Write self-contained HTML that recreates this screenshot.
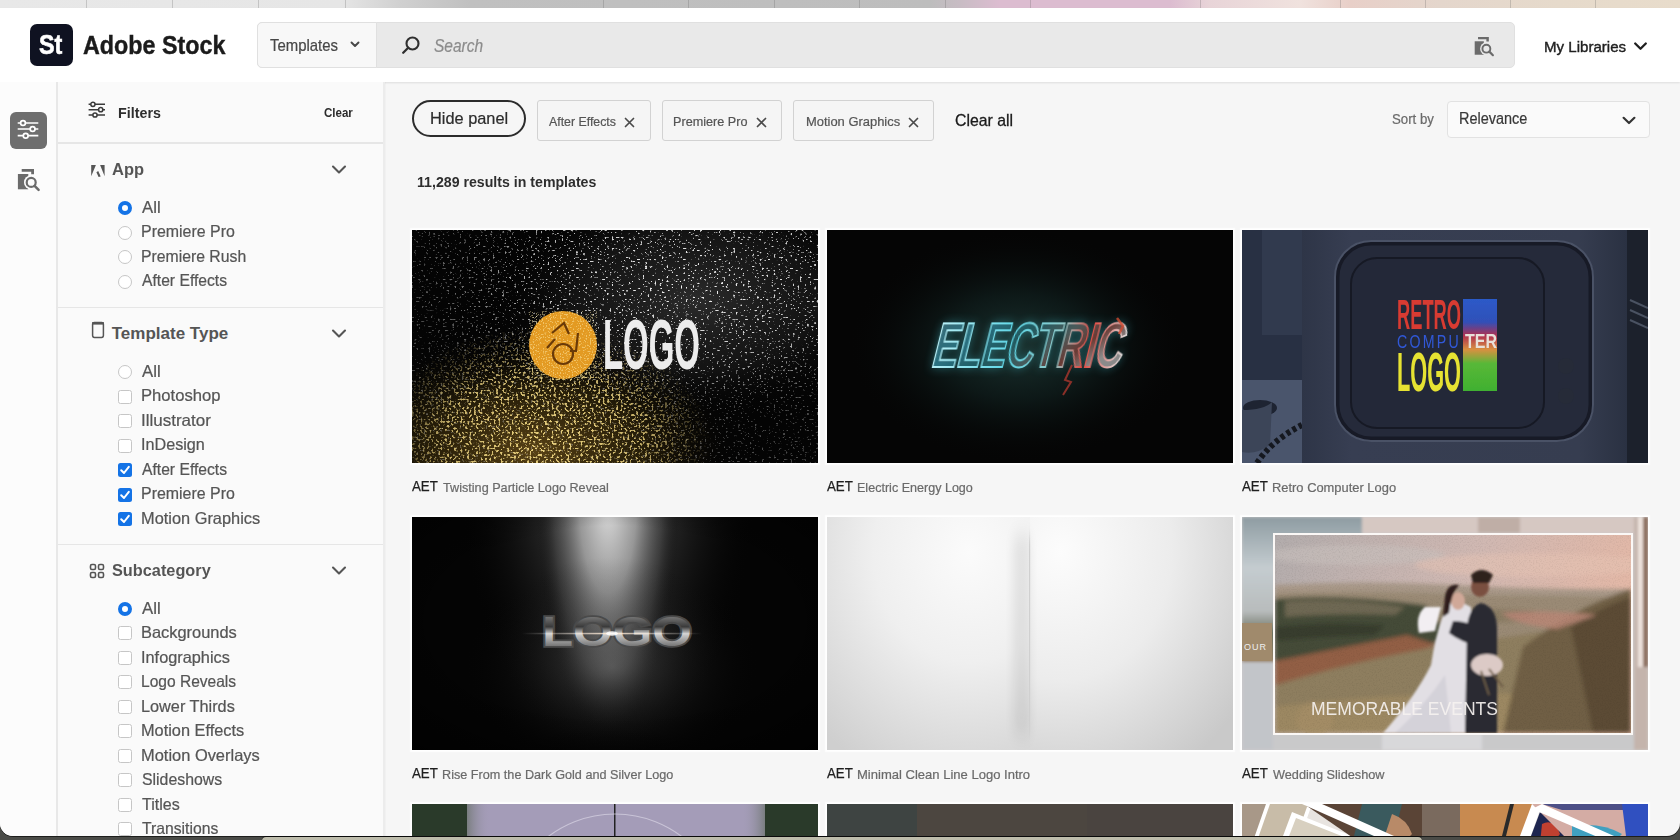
<!DOCTYPE html><html><head><meta charset="utf-8"><style>
*{box-sizing:border-box;margin:0;padding:0}
html,body{width:1680px;height:840px;overflow:hidden;font-family:"Liberation Sans",sans-serif}
body{background:#4a4b47}
.a{position:absolute}
.t{position:absolute;line-height:1;white-space:nowrap;transform-origin:0 0}
#win{position:absolute;left:0;top:0;width:1680px;height:835.8px;box-shadow:0 1px 0 rgba(0,0,0,.6);background:#f6f6f6;border-radius:0 0 13px 13px;overflow:hidden}
.radio{position:absolute;width:14px;height:14px;border-radius:50%;border:1.4px solid #c6c6c6;background:#fff}
.radio.on{border:4.2px solid #1473e6}
.cb{position:absolute;width:14px;height:14px;border-radius:2.5px;border:1.4px solid #c6c6c6;background:#fff}
.cb.on{border:none;background:#1473e6}
.chip{position:absolute;top:100.2px;height:40.6px;border:1px solid #d2d2d2;border-radius:3px;background:#f5f5f5}
.thumb{position:absolute;width:406px;height:233px;overflow:hidden;box-shadow:0 0 0 1.6px #fff,0 0 1px 2.2px rgba(255,255,255,.5)}
</style></head><body><div class="a" style="left:262px;top:836.8px;width:1160px;height:4px;background:#bdbcab;border-radius:6px 6px 0 0;box-shadow:0 -1px 0 #1a1a1a"></div>
<div id="win">
<div class="a" style="left:0;top:0;width:1680px;height:8.4px;background:linear-gradient(90deg,#e8e8e8 0,#e6e6e6 340px,#d0d0d0 400px,#c0c0c0 470px,#bdbdbd 930px,#c8bcc4 960px,#dcbcd0 1000px,#dcbcd0 1170px,#e8d4d8 1210px,#f0e2de 1300px,#e8cfc8 1350px,#e4d6cc 1440px,#e6dacb 1560px,#e8dccb 1680px)"></div>
<div class="a" style="left:86px;top:0;width:1px;height:8.4px;background:rgba(90,90,90,.25)"></div>
<div class="a" style="left:172px;top:0;width:1px;height:8.4px;background:rgba(90,90,90,.25)"></div>
<div class="a" style="left:258px;top:0;width:1px;height:8.4px;background:rgba(90,90,90,.25)"></div>
<div class="a" style="left:345px;top:0;width:1px;height:8.4px;background:rgba(90,90,90,.25)"></div>
<div class="a" style="left:603px;top:0;width:1px;height:8.4px;background:rgba(90,90,90,.25)"></div>
<div class="a" style="left:688px;top:0;width:1px;height:8.4px;background:rgba(90,90,90,.25)"></div>
<div class="a" style="left:774px;top:0;width:1px;height:8.4px;background:rgba(90,90,90,.25)"></div>
<div class="a" style="left:859px;top:0;width:1px;height:8.4px;background:rgba(90,90,90,.25)"></div>
<div class="a" style="left:945px;top:0;width:1px;height:8.4px;background:rgba(90,90,90,.25)"></div>
<div class="a" style="left:1030px;top:0;width:1px;height:8.4px;background:rgba(90,90,90,.25)"></div>
<div class="a" style="left:1200px;top:0;width:1px;height:8.4px;background:rgba(90,90,90,.25)"></div>
<div class="a" style="left:1340px;top:0;width:1px;height:8.4px;background:rgba(90,90,90,.25)"></div>
<div class="a" style="left:1425px;top:0;width:1px;height:8.4px;background:rgba(90,90,90,.25)"></div>
<div class="a" style="left:1510px;top:0;width:1px;height:8.4px;background:rgba(90,90,90,.25)"></div>
<div class="a" style="left:1595px;top:0;width:1px;height:8.4px;background:rgba(90,90,90,.25)"></div>
<div class="a" style="left:0;top:8.4px;width:1680px;height:73.8px;background:#fff;box-shadow:0 1px 2px rgba(0,0,0,.10)"></div>
<div class="a" style="left:30px;top:24px;width:43px;height:42px;background:#0f1221;border-radius:7px"></div>
<span class="t" style="left:39.35px;top:31.85px;font-size:27px;color:#fff;font-weight:bold;transform:scaleX(0.8654);-webkit-text-stroke:0.6px #fff;">St</span>
<span class="t" style="left:83.32px;top:32.66px;font-size:25.7px;color:#1b1b1b;font-weight:bold;transform:scaleX(0.9073);-webkit-text-stroke:0.4px #1b1b1b;">Adobe Stock</span>
<div class="a" style="left:257px;top:22px;width:1258px;height:46px;background:#e9e9e9;border:1px solid #e0e0e0;border-radius:5px"></div>
<div class="a" style="left:257px;top:22px;width:120px;height:46px;background:#f8f8f8;border:1px solid #e0e0e0;border-radius:5px 0 0 5px"></div>
<span class="t" style="left:270.48px;top:36.55px;font-size:17px;color:#474747;transform:scaleX(0.8769);-webkit-text-stroke:0.22px #474747;">Templates</span>
<svg class="a" style="left:349px;top:40px" width="12" height="9" viewBox="0 0 12 9"><path d="M2.5 2.5 L6 6 L9.5 2.5" fill="none" stroke="#474747" stroke-width="1.9" stroke-linecap="round" stroke-linejoin="round"/></svg>
<svg class="a" style="left:400px;top:35px" width="22" height="21" viewBox="0 0 22 21"><circle cx="12.5" cy="8.5" r="6" fill="none" stroke="#2f2f2f" stroke-width="2.1"/><path d="M8.2 12.8 L3.2 17.8" stroke="#2f2f2f" stroke-width="2.3" stroke-linecap="round"/></svg>
<span class="t" style="left:433.57px;top:36.50px;font-size:18px;color:#8c8c8c;font-style:italic;transform:scaleX(0.8610);-webkit-text-stroke:0.22px #8c8c8c;">Search</span>
<svg class="a" style="left:1473px;top:36.1px" width="22.9" height="21.1" viewBox="0 0 26 24"><path d="M5.7 1 H18 V6.3 H15.2 V3.7 H5.7Z" fill="#6b6b6b"/><rect x="1.9" y="6" width="10.4" height="15.3" fill="#6b6b6b"/><circle cx="15.2" cy="14.4" r="7.2" fill="#e9e9e9"/><circle cx="15.2" cy="14.4" r="4.5" fill="none" stroke="#6b6b6b" stroke-width="2.2"/><path d="M18.6 17.8 L22.6 21.8" stroke="#6b6b6b" stroke-width="2.5" stroke-linecap="round"/></svg>
<span class="t" style="left:1543.76px;top:38.68px;font-size:15.2px;color:#1f1f1f;transform:scaleX(0.9932);-webkit-text-stroke:0.4px #1f1f1f;">My Libraries</span>
<svg class="a" style="left:1633px;top:41px" width="15" height="11" viewBox="0 0 15 11"><path d="M2.2 2.5 L7.5 7.8 L12.8 2.5" fill="none" stroke="#1f1f1f" stroke-width="2.3" stroke-linecap="round" stroke-linejoin="round"/></svg>
<div class="a" style="left:0;top:82px;width:58.3px;height:760px;background:#fcfcfc;border-right:2px solid #e8e8e8"></div>
<div class="a" style="left:10px;top:112px;width:37px;height:37px;background:#6e6e6e;border-radius:6px"></div>
<svg class="a" style="left:10px;top:112px" width="37" height="37" viewBox="0 0 37 37"><g stroke="#fff" stroke-width="1.7" fill="none"><path d="M7.7 11H10.6M15.4 11H28.3"/><circle cx="13" cy="11" r="2.4"/><path d="M7.7 17H20.2M25 17H28.3"/><circle cx="22.6" cy="17" r="2.4"/><path d="M7.7 23.7H13.3M18.1 23.7H28.3"/><circle cx="15.7" cy="23.7" r="2.4"/></g></svg>
<svg class="a" style="left:16px;top:168px" width="26" height="24" viewBox="0 0 26 24"><path d="M5.7 1 H18 V6.3 H15.2 V3.7 H5.7Z" fill="#6b6b6b"/><rect x="1.9" y="6" width="10.4" height="15.3" fill="#6b6b6b"/><circle cx="15.2" cy="14.4" r="7.2" fill="#fcfcfc"/><circle cx="15.2" cy="14.4" r="4.5" fill="none" stroke="#6b6b6b" stroke-width="2.2"/><path d="M18.6 17.8 L22.6 21.8" stroke="#6b6b6b" stroke-width="2.5" stroke-linecap="round"/></svg>
<div class="a" style="left:58.3px;top:82px;width:326.7px;height:760px;background:#fafafa;border-right:2px solid #ececec;box-shadow:1px 0 1px rgba(0,0,0,.02)"></div>
<svg class="a" style="left:87px;top:101px" width="20" height="18" viewBox="0 0 20 18"><g stroke="#3a3a3a" stroke-width="1.5" fill="none"><path d="M1.6 3.3H3.8M8 3.3H18"/><circle cx="5.9" cy="3.3" r="2.1"/><path d="M1.6 8.7H11.6M15.8 8.7H18"/><circle cx="13.7" cy="8.7" r="2.1"/><path d="M1.6 14H5.9M10.1 14H18"/><circle cx="8" cy="14" r="2.1"/></g></svg>
<span class="t" style="left:117.58px;top:104.92px;font-size:15.5px;color:#2e2e2e;font-weight:bold;transform:scaleX(0.9222);">Filters</span>
<span class="t" style="left:324.16px;top:106.35px;font-size:13px;color:#2c2c2c;font-weight:bold;transform:scaleX(0.8875);">Clear</span>
<div class="a" style="left:58px;top:142px;width:325px;height:1.5px;background:#e6e6e6"></div>
<svg class="a" style="left:90px;top:164px" width="16" height="14" viewBox="0 0 16 14"><path d="M1.2 1.1 L5.9 1.1 L1.2 12.3Z M10.1 1.1 L14.6 1.1 L14.6 12.3Z M6.4 8.2 L8.2 6.9 L10.7 12.6 L8.6 13.1Z" fill="#555"/></svg>
<span class="t" style="left:111.52px;top:161.35px;font-size:17px;color:#555;font-weight:bold;transform:scaleX(0.9688);">App</span>
<svg class="a" style="left:330.5px;top:164px" width="16" height="11" viewBox="0 0 16 11"><path d="M2 2.5 L8 8.5 L14 2.5" fill="none" stroke="#555" stroke-width="2.1" stroke-linecap="round" stroke-linejoin="round"/></svg>
<div class="radio on" style="left:117.7px;top:201.0px"></div>
<span class="t" style="left:142.40px;top:198.97px;font-size:16.5px;color:#555;transform:scaleX(1.0145);-webkit-text-stroke:0.22px #555;">All</span>
<div class="radio" style="left:117.7px;top:225.5px"></div>
<span class="t" style="left:141.19px;top:223.47px;font-size:16.5px;color:#555;transform:scaleX(0.9659);-webkit-text-stroke:0.22px #555;">Premiere Pro</span>
<div class="radio" style="left:117.7px;top:250.0px"></div>
<span class="t" style="left:141.21px;top:247.97px;font-size:16.5px;color:#555;transform:scaleX(0.9559);-webkit-text-stroke:0.22px #555;">Premiere Rush</span>
<div class="radio" style="left:117.7px;top:274.5px"></div>
<span class="t" style="left:142.40px;top:272.48px;font-size:16.5px;color:#555;transform:scaleX(0.9494);-webkit-text-stroke:0.22px #555;">After Effects</span>
<div class="a" style="left:58px;top:306.5px;width:325px;height:1.5px;background:#e6e6e6"></div>
<svg class="a" style="left:91px;top:321px" width="14" height="18" viewBox="0 0 14 18"><rect x="1.6" y="1.6" width="10.8" height="14.8" rx="1.8" fill="none" stroke="#555" stroke-width="1.5"/><rect x="1.2" y="1" width="11.6" height="2.6" fill="#555"/></svg>
<span class="t" style="left:111.75px;top:324.85px;font-size:17px;color:#555;font-weight:bold;">Template Type</span>
<svg class="a" style="left:330.5px;top:327.5px" width="16" height="11" viewBox="0 0 16 11"><path d="M2 2.5 L8 8.5 L14 2.5" fill="none" stroke="#555" stroke-width="2.1" stroke-linecap="round" stroke-linejoin="round"/></svg>
<div class="radio" style="left:117.7px;top:365.0px"></div>
<span class="t" style="left:142.40px;top:362.98px;font-size:16.5px;color:#555;transform:scaleX(1.0145);-webkit-text-stroke:0.22px #555;">All</span>
<div class="cb" style="left:117.7px;top:389.5px"></div>
<span class="t" style="left:141.14px;top:387.48px;font-size:16.5px;color:#555;transform:scaleX(1.0065);-webkit-text-stroke:0.22px #555;">Photoshop</span>
<div class="cb" style="left:117.7px;top:414.0px"></div>
<span class="t" style="left:140.85px;top:411.98px;font-size:16.5px;color:#555;transform:scaleX(1.0303);-webkit-text-stroke:0.22px #555;">Illustrator</span>
<div class="cb" style="left:117.7px;top:438.5px"></div>
<span class="t" style="left:140.93px;top:436.48px;font-size:16.5px;color:#555;transform:scaleX(0.9801);-webkit-text-stroke:0.22px #555;">InDesign</span>
<div class="cb on" style="left:117.7px;top:463.0px"></div>
<svg class="a" style="left:117.7px;top:463.0px" width="14" height="14" viewBox="0 0 14 14"><path d="M3.2 7.2 L6 10 L10.8 3.8" fill="none" stroke="#fff" stroke-width="2" stroke-linecap="round" stroke-linejoin="round"/></svg>
<span class="t" style="left:142.40px;top:460.98px;font-size:16.5px;color:#555;transform:scaleX(0.9494);-webkit-text-stroke:0.22px #555;">After Effects</span>
<div class="cb on" style="left:117.7px;top:487.5px"></div>
<svg class="a" style="left:117.7px;top:487.5px" width="14" height="14" viewBox="0 0 14 14"><path d="M3.2 7.2 L6 10 L10.8 3.8" fill="none" stroke="#fff" stroke-width="2" stroke-linecap="round" stroke-linejoin="round"/></svg>
<span class="t" style="left:141.19px;top:485.48px;font-size:16.5px;color:#555;transform:scaleX(0.9659);-webkit-text-stroke:0.22px #555;">Premiere Pro</span>
<div class="cb on" style="left:117.7px;top:512.0px"></div>
<svg class="a" style="left:117.7px;top:512.0px" width="14" height="14" viewBox="0 0 14 14"><path d="M3.2 7.2 L6 10 L10.8 3.8" fill="none" stroke="#fff" stroke-width="2" stroke-linecap="round" stroke-linejoin="round"/></svg>
<span class="t" style="left:141.16px;top:509.98px;font-size:16.5px;color:#555;transform:scaleX(0.9916);-webkit-text-stroke:0.22px #555;">Motion Graphics</span>
<div class="a" style="left:58px;top:543.5px;width:325px;height:1.5px;background:#e6e6e6"></div>
<svg class="a" style="left:89px;top:563px" width="16" height="16" viewBox="0 0 16 16"><g fill="none" stroke="#555" stroke-width="1.6"><rect x="1.5" y="1.5" width="5" height="5" rx="1.4"/><rect x="9.5" y="1.5" width="5" height="5" rx="1.4"/><rect x="1.5" y="9.5" width="5" height="5" rx="1.4"/><rect x="9.5" y="9.5" width="5" height="5" rx="1.4"/></g></svg>
<span class="t" style="left:111.52px;top:562.35px;font-size:17px;color:#555;font-weight:bold;transform:scaleX(0.9584);">Subcategory</span>
<svg class="a" style="left:330.5px;top:564.5px" width="16" height="11" viewBox="0 0 16 11"><path d="M2 2.5 L8 8.5 L14 2.5" fill="none" stroke="#555" stroke-width="2.1" stroke-linecap="round" stroke-linejoin="round"/></svg>
<div class="radio on" style="left:117.7px;top:601.6px"></div>
<span class="t" style="left:142.40px;top:599.58px;font-size:16.5px;color:#555;transform:scaleX(1.0145);-webkit-text-stroke:0.22px #555;">All</span>
<div class="cb" style="left:117.7px;top:626.1px"></div>
<span class="t" style="left:141.16px;top:624.08px;font-size:16.5px;color:#555;transform:scaleX(0.9947);-webkit-text-stroke:0.22px #555;">Backgrounds</span>
<div class="cb" style="left:117.7px;top:650.6px"></div>
<span class="t" style="left:140.92px;top:648.58px;font-size:16.5px;color:#555;transform:scaleX(0.9886);-webkit-text-stroke:0.22px #555;">Infographics</span>
<div class="cb" style="left:117.7px;top:675.1px"></div>
<span class="t" style="left:141.22px;top:673.08px;font-size:16.5px;color:#555;transform:scaleX(0.9421);-webkit-text-stroke:0.22px #555;">Logo Reveals</span>
<div class="cb" style="left:117.7px;top:699.6px"></div>
<span class="t" style="left:141.17px;top:697.58px;font-size:16.5px;color:#555;transform:scaleX(0.9866);-webkit-text-stroke:0.22px #555;">Lower Thirds</span>
<div class="cb" style="left:117.7px;top:724.1px"></div>
<span class="t" style="left:141.16px;top:722.08px;font-size:16.5px;color:#555;transform:scaleX(0.9902);-webkit-text-stroke:0.22px #555;">Motion Effects</span>
<div class="cb" style="left:117.7px;top:748.6px"></div>
<span class="t" style="left:141.16px;top:746.58px;font-size:16.5px;color:#555;transform:scaleX(0.9957);-webkit-text-stroke:0.22px #555;">Motion Overlays</span>
<div class="cb" style="left:117.7px;top:773.1px"></div>
<span class="t" style="left:141.68px;top:771.08px;font-size:16.5px;color:#555;transform:scaleX(0.9605);-webkit-text-stroke:0.22px #555;">Slideshows</span>
<div class="cb" style="left:117.7px;top:797.6px"></div>
<span class="t" style="left:142.16px;top:795.58px;font-size:16.5px;color:#555;transform:scaleX(0.9737);-webkit-text-stroke:0.22px #555;">Titles</span>
<div class="cb" style="left:117.7px;top:822.1px"></div>
<span class="t" style="left:142.16px;top:820.08px;font-size:16.5px;color:#555;transform:scaleX(0.9527);-webkit-text-stroke:0.22px #555;">Transitions</span>
<div class="a" style="left:412px;top:99.8px;width:114px;height:37px;border:2px solid #2c2c2c;border-radius:19px"></div>
<span class="t" style="left:429.80px;top:110.05px;font-size:17px;color:#2c2c2c;transform:scaleX(0.9620);-webkit-text-stroke:0.22px #2c2c2c;">Hide panel</span>
<div class="chip" style="left:536.5px;width:114.2px"></div>
<span class="t" style="left:549.00px;top:114.71px;font-size:13.4px;color:#555;transform:scaleX(0.9210);-webkit-text-stroke:0.22px #555;">After Effects</span>
<svg class="a" style="left:623.5px;top:116.5px" width="11" height="11" viewBox="0 0 11 11"><path d="M1.5 1.5 L9.5 9.5 M9.5 1.5 L1.5 9.5" stroke="#4a4a4a" stroke-width="1.7" stroke-linecap="round"/></svg>
<div class="chip" style="left:662px;width:120.4px"></div>
<span class="t" style="left:673.46px;top:114.71px;font-size:13.4px;color:#555;transform:scaleX(0.9436);-webkit-text-stroke:0.22px #555;">Premiere Pro</span>
<svg class="a" style="left:755.5px;top:116.5px" width="11" height="11" viewBox="0 0 11 11"><path d="M1.5 1.5 L9.5 9.5 M9.5 1.5 L1.5 9.5" stroke="#4a4a4a" stroke-width="1.7" stroke-linecap="round"/></svg>
<div class="chip" style="left:793.4px;width:140.6px"></div>
<span class="t" style="left:805.63px;top:114.71px;font-size:13.4px;color:#555;transform:scaleX(0.9654);-webkit-text-stroke:0.22px #555;">Motion Graphics</span>
<svg class="a" style="left:907.5px;top:116.5px" width="11" height="11" viewBox="0 0 11 11"><path d="M1.5 1.5 L9.5 9.5 M9.5 1.5 L1.5 9.5" stroke="#4a4a4a" stroke-width="1.7" stroke-linecap="round"/></svg>
<span class="t" style="left:955.00px;top:111.95px;font-size:17px;color:#1a1a1a;transform:scaleX(0.9306);-webkit-text-stroke:0.3px #1a1a1a;">Clear all</span>
<span class="t" style="left:1391.78px;top:113.07px;font-size:13.8px;color:#6b6b6b;transform:scaleX(0.9591);-webkit-text-stroke:0.22px #6b6b6b;">Sort by</span>
<div class="a" style="left:1446.5px;top:100.8px;width:203px;height:37px;background:#fafafa;border:1px solid #e2e2e2;border-radius:4px"></div>
<span class="t" style="left:1458.87px;top:110.70px;font-size:16px;color:#383838;transform:scaleX(0.9031);-webkit-text-stroke:0.22px #383838;">Relevance</span>
<svg class="a" style="left:1620.5px;top:114.5px" width="16" height="11" viewBox="0 0 16 11"><path d="M2.6 2.8 L8 8 L13.4 2.8" fill="none" stroke="#333" stroke-width="2.2" stroke-linecap="round" stroke-linejoin="round"/></svg>
<span class="t" style="left:416.54px;top:174.50px;font-size:14.7px;color:#2e2e2e;font-weight:bold;transform:scaleX(0.9636);">11,289 results in templates</span>
<div class="thumb" style="left:412px;top:230px"><svg width="406" height="233" viewBox="0 0 406 233" style="display:block"><defs><radialGradient id="t1w" cx="0.7" cy="0.3" r="0.5"><stop offset="0" stop-color="#5a5a5a" stop-opacity=".45"/><stop offset=".6" stop-color="#404040" stop-opacity=".25"/><stop offset="1" stop-color="#000" stop-opacity="0"/></radialGradient><radialGradient id="t1g" cx="0.3" cy="0.95" r="0.5"><stop offset="0" stop-color="#906a20" stop-opacity=".6"/><stop offset=".55" stop-color="#604810" stop-opacity=".35"/><stop offset="1" stop-color="#000" stop-opacity="0"/></radialGradient><filter id="t1n" x="0" y="0" width="1" height="1"><feTurbulence type="fractalNoise" baseFrequency="0.42 0.55" numOctaves="1" seed="4"/><feColorMatrix values="0 0 0 0 .92 0 0 0 0 .92 0 0 0 0 .92 0 0 0 10 -6.2"/></filter><filter id="t1ng" x="0" y="0" width="1" height="1"><feTurbulence type="fractalNoise" baseFrequency="0.45" numOctaves="1" seed="9"/><feColorMatrix values="0 0 0 0 .85 0 0 0 0 .66 0 0 0 0 .22 0 0 0 9 -4.9"/></filter><filter id="t1n2" x="0" y="0" width="1" height="1"><feTurbulence type="fractalNoise" baseFrequency="0.7" numOctaves="1" seed="2"/><feColorMatrix values="0 0 0 0 1 0 0 0 0 .85 0 0 0 0 .4 0 0 0 10 -5.5"/></filter><radialGradient id="t1rw" cx="0.68" cy="0.22" r="0.6" gradientTransform="translate(0.68 0.22) scale(1.15 1) translate(-0.68 -0.22)"><stop offset="0" stop-color="#fff"/><stop offset=".5" stop-color="#fff" stop-opacity=".8"/><stop offset=".85" stop-color="#fff" stop-opacity=".4"/><stop offset="1" stop-color="#fff" stop-opacity=".3"/></radialGradient><mask id="t1mw"><rect width="406" height="233" fill="url(#t1rw)"/></mask><radialGradient id="t1rg" cx="0.33" cy="0.9" r="0.45" gradientTransform="translate(0.33 0.9) scale(0.9 1.1) translate(-0.33 -0.9)"><stop offset="0" stop-color="#fff"/><stop offset=".6" stop-color="#fff" stop-opacity=".8"/><stop offset="1" stop-color="#fff" stop-opacity="0"/></radialGradient><mask id="t1mg"><rect width="406" height="233" fill="url(#t1rg)"/></mask></defs><rect width="406" height="233" fill="#040404"/><rect width="406" height="233" fill="url(#t1w)"/><rect width="406" height="233" fill="url(#t1g)"/><rect width="406" height="233" filter="url(#t1n)" mask="url(#t1mw)"/><rect width="406" height="233" filter="url(#t1ng)" mask="url(#t1mg)"/><circle cx="151" cy="115" r="34" fill="#e39a22"/><circle cx="151" cy="115" r="34" filter="url(#t1n2)" opacity=".5"/><g fill="none" stroke="#6a3a08" stroke-width="2.2"><circle cx="151" cy="124" r="10"/><path d="M140 103 L152 93 L157 104 M143 109 L135 118 M166 103 L164 121 L158 121"/></g><text x="0" y="0" font-family="Liberation Sans" font-weight="bold" font-size="70" fill="#ececec" transform="translate(191 139)" textLength="97" lengthAdjust="spacingAndGlyphs">LOGO</text></svg></div>
<span class="t" style="left:412.00px;top:479.42px;font-size:14.8px;color:#1f1f1f;transform:scaleX(0.8982);-webkit-text-stroke:0.25px #1f1f1f;">AET</span>
<span class="t" style="left:442.76px;top:480.69px;font-size:13.3px;color:#6a6a6a;transform:scaleX(0.9507);-webkit-text-stroke:0.22px #6a6a6a;">Twisting Particle Logo Reveal</span>
<div class="thumb" style="left:827px;top:230px"><svg width="406" height="233" viewBox="0 0 406 233" style="display:block"><defs><radialGradient id="t2glow" cx="0.47" cy="0.5" r="0.42" gradientTransform="translate(0.47 0.5) scale(1 1.2) translate(-0.47 -0.5)"><stop offset="0" stop-color="#1c3532" stop-opacity=".95"/><stop offset=".45" stop-color="#0f1d1c" stop-opacity=".8"/><stop offset="1" stop-color="#050505" stop-opacity="0"/></radialGradient><linearGradient id="t2txt" x1="0" y1="0" x2="1" y2="0.4"><stop offset="0" stop-color="#3a6a74"/><stop offset=".3" stop-color="#2a7080"/><stop offset=".5" stop-color="#205a60"/><stop offset=".7" stop-color="#4a5a5a"/><stop offset=".85" stop-color="#6a3a34"/><stop offset="1" stop-color="#8a8a8a"/></linearGradient><linearGradient id="t2str" x1="0" y1="0" x2="1" y2="0"><stop offset="0" stop-color="#b8f0f8"/><stop offset=".4" stop-color="#60d8e8"/><stop offset=".65" stop-color="#90c8c8"/><stop offset=".8" stop-color="#e04840"/><stop offset="1" stop-color="#e0e0e0"/></linearGradient><filter id="t2blur"><feGaussianBlur stdDeviation="0.45"/></filter><filter id="t2g" x="-20%" y="-50%" width="140%" height="200%"><feGaussianBlur stdDeviation="5"/></filter></defs><rect width="406" height="233" fill="#050505"/><rect width="406" height="233" fill="url(#t2glow)"/><g transform="translate(103 137) skewX(-14)"><text x="0" y="0" font-family="Liberation Sans" font-weight="bold" font-size="63" fill="#40c0d0" opacity=".5" filter="url(#t2g)" textLength="190" lengthAdjust="spacingAndGlyphs">ELECTRIC</text><text x="0" y="0" font-family="Liberation Sans" font-weight="bold" font-size="63" fill="url(#t2txt)" stroke="url(#t2str)" stroke-width="2" paint-order="fill" filter="url(#t2blur)" textLength="190" lengthAdjust="spacingAndGlyphs">ELECTRIC</text></g><path d="M245 135 L238 150 L244 152 L236 165" stroke="#c03a30" stroke-width="2" fill="none" opacity=".7"/><path d="M290 88 L296 96 L292 104" stroke="#d04a30" stroke-width="2.5" fill="none" opacity=".8"/></svg></div>
<span class="t" style="left:827.00px;top:479.42px;font-size:14.8px;color:#1f1f1f;transform:scaleX(0.8982);-webkit-text-stroke:0.25px #1f1f1f;">AET</span>
<span class="t" style="left:857.06px;top:480.69px;font-size:13.3px;color:#6a6a6a;transform:scaleX(0.9441);-webkit-text-stroke:0.22px #6a6a6a;">Electric Energy Logo</span>
<div class="thumb" style="left:1242px;top:230px"><svg width="406" height="233" viewBox="0 0 406 233" style="display:block"><defs><filter id="t3gl" x="-10%" y="-10%" width="120%" height="120%"><feGaussianBlur stdDeviation="0.7"/></filter><linearGradient id="t3case" x1="0" y1="0" x2="1" y2="0"><stop offset="0" stop-color="#2e3547"/><stop offset=".15" stop-color="#373e52"/><stop offset=".85" stop-color="#363d50"/><stop offset="1" stop-color="#2a3142"/></linearGradient><linearGradient id="t3blk" x1="0" y1="0" x2="0" y2="1"><stop offset="0" stop-color="#2c5ac8"/><stop offset=".25" stop-color="#3050b8"/><stop offset=".4" stop-color="#b03050"/><stop offset=".55" stop-color="#d89040"/><stop offset=".7" stop-color="#58b838"/><stop offset="1" stop-color="#40b030"/></linearGradient></defs><rect width="406" height="233" fill="#283043"/><rect x="20" y="0" width="42" height="105" fill="#313a4e"/><rect x="0" y="150" width="62" height="83" fill="#4a556c"/><ellipse cx="18" cy="178" rx="17" ry="8" fill="#1e2432"/><path d="M0 180 Q22 180 30 172 L28 215 Q14 225 0 222Z" fill="#3c4558"/><path d="M15 233 Q30 210 60 195" stroke="#15181f" stroke-width="6" fill="none" stroke-dasharray="4 3"/><rect x="60" y="0" width="325" height="233" fill="url(#t3case)"/><rect x="385" y="0" width="21" height="233" fill="#1c212c"/><path d="M388 70 L406 78 M388 80 L406 88 M388 90 L406 98" stroke="#4a5262" stroke-width="2"/><rect x="93" y="11" width="258" height="200" rx="36" fill="#252a3a"/><rect x="95" y="13" width="254" height="196" rx="34" fill="none" stroke="#171a26" stroke-width="5"/><rect x="93" y="11" width="258" height="200" rx="36" fill="none" stroke="#4a5266" stroke-width="2"/><rect x="109" y="28" width="193" height="170" rx="26" fill="#232838"/><rect x="109" y="28" width="193" height="170" rx="26" fill="none" stroke="#161924" stroke-width="2"/><circle cx="324" cy="136" r="8" fill="#262b38"/><circle cx="324" cy="166" r="8" fill="#262b38"/><g filter="url(#t3gl)"><text x="0" y="0" font-family="Liberation Sans" font-weight="bold" font-size="42" fill="#d83a30" transform="translate(155 98.5)" textLength="64" lengthAdjust="spacingAndGlyphs">RETRO</text><text x="0" y="0" font-family="Liberation Sans" font-size="19" fill="#3058d8" transform="translate(155 118)" textLength="64" letter-spacing="3" lengthAdjust="spacingAndGlyphs">COMPU</text><text x="0" y="0" font-family="Liberation Sans" font-weight="bold" font-size="55" fill="#e6e232" transform="translate(155 161)" textLength="64" lengthAdjust="spacingAndGlyphs">LOGO</text><rect x="221" y="69" width="34" height="92" fill="url(#t3blk)"/><text x="0" y="0" font-family="Liberation Sans" font-weight="bold" font-size="21" fill="#e8e0d8" transform="translate(223 118)" textLength="32" lengthAdjust="spacingAndGlyphs">TER</text></g></svg></div>
<span class="t" style="left:1242.00px;top:479.42px;font-size:14.8px;color:#1f1f1f;transform:scaleX(0.8982);-webkit-text-stroke:0.25px #1f1f1f;">AET</span>
<span class="t" style="left:1272.03px;top:480.69px;font-size:13.3px;color:#6a6a6a;transform:scaleX(0.9702);-webkit-text-stroke:0.22px #6a6a6a;">Retro Computer Logo</span>
<div class="thumb" style="left:412px;top:517px"><svg width="406" height="233" viewBox="0 0 406 233" style="display:block"><defs><linearGradient id="t4h" x1="0" y1="0" x2="1" y2="0"><stop offset=".29" stop-color="#fff" stop-opacity="0"/><stop offset=".39" stop-color="#c8c8c8" stop-opacity=".45"/><stop offset=".45" stop-color="#e0e0e0" stop-opacity=".95"/><stop offset=".53" stop-color="#d8d8d8" stop-opacity=".9"/><stop offset=".6" stop-color="#b0b0b0" stop-opacity=".45"/><stop offset=".7" stop-color="#fff" stop-opacity="0"/></linearGradient><linearGradient id="t4v" x1="0" y1="0" x2="0" y2="1"><stop offset="0" stop-color="#fff"/><stop offset=".25" stop-color="#aaa"/><stop offset=".5" stop-color="#555"/><stop offset=".8" stop-color="#222"/><stop offset="1" stop-color="#111"/></linearGradient><mask id="t4mv"><rect width="406" height="233" fill="url(#t4v)"/></mask><radialGradient id="t4b1"><stop offset="0" stop-color="#e8e8e8" stop-opacity=".95"/><stop offset=".4" stop-color="#c0c0c0" stop-opacity=".7"/><stop offset=".75" stop-color="#707070" stop-opacity=".3"/><stop offset="1" stop-color="#000" stop-opacity="0"/></radialGradient><radialGradient id="t4b2"><stop offset="0" stop-color="#9a9a9a" stop-opacity=".6"/><stop offset=".5" stop-color="#505050" stop-opacity=".35"/><stop offset="1" stop-color="#000" stop-opacity="0"/></radialGradient><radialGradient id="t4glow"><stop offset="0" stop-color="#9a9a9a" stop-opacity=".35"/><stop offset="1" stop-color="#000" stop-opacity="0"/></radialGradient><radialGradient id="t4vig" cx="0.5" cy="0.45" r="0.75"><stop offset=".55" stop-color="#000" stop-opacity="0"/><stop offset="1" stop-color="#000" stop-opacity=".7"/></radialGradient><linearGradient id="t4met" x1="0" y1="0" x2="0" y2="1"><stop offset="0" stop-color="#a8a8a8"/><stop offset=".4" stop-color="#3a3a3a"/><stop offset=".55" stop-color="#d0d0d0"/><stop offset="1" stop-color="#333"/></linearGradient><linearGradient id="t4flare" x1="0" y1="0" x2="1" y2="0"><stop offset="0" stop-color="#fff" stop-opacity="0"/><stop offset=".5" stop-color="#ffe8d0" stop-opacity=".9"/><stop offset="1" stop-color="#fff" stop-opacity="0"/></linearGradient></defs><rect width="406" height="233" fill="#040404"/><ellipse cx="196" cy="-30" rx="150" ry="270" fill="url(#t4b2)"/><ellipse cx="196" cy="-20" rx="72" ry="240" fill="url(#t4b1)"/><ellipse cx="200" cy="150" rx="150" ry="110" fill="url(#t4glow)"/><rect width="406" height="233" fill="url(#t4vig)"/><text x="0" y="0" font-family="Liberation Sans" font-weight="bold" font-size="42" fill="url(#t4met)" stroke="#4a4a4a" stroke-width="3.6" paint-order="stroke" transform="translate(130 129)" textLength="150" lengthAdjust="spacingAndGlyphs">LOGO</text><rect x="110" y="115.8" width="180" height="1.5" fill="url(#t4flare)"/><ellipse cx="200" cy="116.5" rx="6" ry="2.2" fill="#fff" opacity=".85"/></svg></div>
<span class="t" style="left:412.00px;top:766.42px;font-size:14.8px;color:#1f1f1f;transform:scaleX(0.8982);-webkit-text-stroke:0.25px #1f1f1f;">AET</span>
<span class="t" style="left:442.05px;top:767.70px;font-size:13.3px;color:#6a6a6a;transform:scaleX(0.9512);-webkit-text-stroke:0.22px #6a6a6a;">Rise From the Dark Gold and Silver Logo</span>
<div class="thumb" style="left:827px;top:517px"><svg width="406" height="233" viewBox="0 0 406 233" style="display:block"><defs><radialGradient id="t5l" cx="0.7" cy="0.15" r="1.05"><stop offset="0" stop-color="#fbfbfb"/><stop offset=".45" stop-color="#efefef"/><stop offset="1" stop-color="#cfcfcf"/></radialGradient><radialGradient id="t5r" cx="0.15" cy="0.15" r="1.1"><stop offset="0" stop-color="#fcfcfc"/><stop offset=".5" stop-color="#ececec"/><stop offset="1" stop-color="#c9c9c9"/></radialGradient><filter id="t5bl" x="-50%" y="-20%" width="200%" height="140%"><feGaussianBlur stdDeviation="5 10"/></filter><filter id="t5bl2" x="-200%" y="-20%" width="500%" height="140%"><feGaussianBlur stdDeviation="0.4 6"/></filter><linearGradient id="t5line" x1="0" y1="0" x2="1" y2="0"><stop offset="0" stop-color="#000" stop-opacity="0"/><stop offset="1" stop-color="#000" stop-opacity=".08"/></linearGradient></defs><rect width="406" height="233" fill="#e4e4e4"/><rect width="203" height="233" fill="url(#t5l)"/><rect x="203" width="203" height="233" fill="url(#t5r)"/><rect x="186" y="18" width="17" height="200" fill="#000" opacity=".07" filter="url(#t5bl)"/><rect x="202" y="20" width="1.2" height="196" fill="#d0d0d0" filter="url(#t5bl2)"/></svg></div>
<span class="t" style="left:827.00px;top:766.42px;font-size:14.8px;color:#1f1f1f;transform:scaleX(0.8982);-webkit-text-stroke:0.25px #1f1f1f;">AET</span>
<span class="t" style="left:857.02px;top:767.70px;font-size:13.3px;color:#6a6a6a;transform:scaleX(0.9799);-webkit-text-stroke:0.22px #6a6a6a;">Minimal Clean Line Logo Intro</span>
<div class="thumb" style="left:1242px;top:517px"><svg width="406" height="233" viewBox="0 0 406 233" style="display:block"><defs><linearGradient id="t6lp" x1="0" y1="0" x2="0" y2="1"><stop offset="0" stop-color="#8e9ca2"/><stop offset=".35" stop-color="#c4ccd0"/><stop offset=".65" stop-color="#b8bcbc"/><stop offset=".8" stop-color="#6a7060"/><stop offset="1" stop-color="#9a8468"/></linearGradient><linearGradient id="t6sky" x1="0" y1="0" x2="1" y2="0.3"><stop offset="0" stop-color="#b2acac"/><stop offset=".55" stop-color="#d0b8b2"/><stop offset="1" stop-color="#e4b8a6"/></linearGradient><filter id="t6b" x="-5%" y="-5%" width="110%" height="110%"><feGaussianBlur stdDeviation="2.2"/></filter><filter id="t6b1" x="-10%" y="-10%" width="120%" height="120%"><feGaussianBlur stdDeviation="0.8"/></filter><filter id="t6n" x="0" y="0" width="100%" height="100%"><feTurbulence type="fractalNoise" baseFrequency="0.7" numOctaves="2" seed="5"/><feColorMatrix values="0 0 0 0 0 0 0 0 0 0 0 0 0 0 0 0 0 0 2 -0.9"/></filter><filter id="t6b2" x="0" y="0" width="100%" height="100%"><feGaussianBlur stdDeviation="1.5"/></filter></defs><rect width="406" height="233" fill="#cfcccc"/><g filter="url(#t6b2)"><rect x="0" y="0" width="120" height="145" fill="url(#t6lp)"/><rect x="120" y="0" width="286" height="16" fill="#d6c8c2"/><rect x="236" y="0" width="42" height="16" fill="#bfaea6"/><rect x="0" y="145" width="31" height="88" fill="#c2c5c9"/><rect x="31" y="217" width="361" height="16" fill="#c9c9ca"/><rect x="140" y="217" width="100" height="16" fill="#d8d8da"/><rect x="392" y="0" width="14" height="233" fill="#c4b4ac"/><rect x="396" y="0" width="5" height="150" fill="#efe4de"/><rect x="401" y="0" width="5" height="150" fill="#8a6a5a"/></g><rect x="0" y="106" width="30" height="38" fill="#a08a6c"/><text x="2" y="133" font-family="Liberation Sans" font-size="9" fill="#eee" letter-spacing="1">OUR</text><rect x="31" y="16" width="360" height="202" fill="#fbf8f6"/><svg x="33" y="18" width="356" height="198" viewBox="0 0 356 198"><rect width="356" height="198" fill="url(#t6sky)"/><g filter="url(#t6b)"><ellipse cx="80" cy="20" rx="90" ry="10" fill="#c8c0bc" opacity=".6"/><ellipse cx="260" cy="30" rx="120" ry="12" fill="#e8c4b4" opacity=".5"/><path d="M0 50 Q90 45 180 50 T356 54 L356 198 L0 198Z" fill="#a89888"/><path d="M0 58 Q100 54 200 60 L356 62 L356 198 L0 198Z" fill="#9a8a74"/><path d="M0 64 Q60 58 150 70 Q172 88 168 106 Q100 120 0 126Z" fill="#454b37"/><path d="M10 66 Q70 62 130 72 L120 80 Q60 78 10 82Z" fill="#6e6852"/><path d="M0 92 Q50 86 110 90 L100 100 Q50 102 0 106Z" fill="#383e2e"/><path d="M0 126 Q70 112 132 100 L162 110 Q92 134 0 152Z" fill="#925e44"/><path d="M150 74 Q200 72 260 76 L250 86 Q200 90 160 86Z" fill="#8a7c64"/><path d="M0 150 Q120 114 232 102 L356 84 L356 198 L0 198Z" fill="#8e7e5e"/><path d="M0 172 Q150 152 356 162 L356 198 L0 198Z" fill="#9c8862"/><path d="M228 198 L248 112 Q300 72 356 54 L356 198Z" fill="#705e44"/><path d="M296 92 Q326 72 356 62 L356 198 L318 198Z" fill="#5c4c36"/><path d="M226 78 Q272 74 322 80 L282 94 Q242 90 226 78Z" fill="#b88676" opacity=".85"/><circle cx="150" cy="170" r="14" fill="#7a6a4c" opacity=".6"/><circle cx="40" cy="185" r="18" fill="#a89068" opacity=".6"/></g><rect width="356" height="198" filter="url(#t6n)" opacity=".07"/><g filter="url(#t6b1)"><path d="M108 198 Q140 162 156 130 Q160 102 168 80 Q172 70 180 64 L196 72 Q198 122 196 198Z" fill="#e2dfe4"/><path d="M120 198 Q150 170 170 140 L176 198Z" fill="#cfccd4" opacity=".7"/><path d="M150 72 Q140 80 144 98 L160 96 L166 72Z" fill="#f2eef2"/><path d="M190 198 L192 92 Q194 72 206 68 Q222 72 222 94 L222 198Z" fill="#2a2b33"/><path d="M178 86 Q200 86 210 102 L204 112 Q184 106 174 98Z" fill="#2a2b33"/><ellipse cx="205" cy="52" rx="9" ry="10" fill="#7a5040"/><path d="M196 40 Q206 30 218 40 L214 48 L198 48Z" fill="#2e221e"/><ellipse cx="183" cy="66" rx="7" ry="9" fill="#d0a898"/><path d="M170 62 Q172 48 184 50 Q176 58 174 78 L168 82Z" fill="#2e1e1a"/><ellipse cx="212" cy="130" rx="16" ry="11" fill="#dccac6"/><path d="M214 134 L228 152 M206 136 L214 160" stroke="#6a5a44" stroke-width="2"/></g></svg><text x="0" y="0" font-family="Liberation Sans" font-size="18" fill="#f6f2f0" opacity=".92" transform="translate(69 197.5)" textLength="187" lengthAdjust="spacingAndGlyphs">MEMORABLE EVENTS</text></svg></div>
<span class="t" style="left:1242.00px;top:766.42px;font-size:14.8px;color:#1f1f1f;transform:scaleX(0.8982);-webkit-text-stroke:0.25px #1f1f1f;">AET</span>
<span class="t" style="left:1273.00px;top:767.70px;font-size:13.3px;color:#6a6a6a;transform:scaleX(0.9569);-webkit-text-stroke:0.22px #6a6a6a;">Wedding Slideshow</span>
<div class="thumb" style="left:412px;top:804px"><svg width="406" height="233" viewBox="0 0 406 233" style="display:block"><defs><linearGradient id="t7s" x1="0" y1="0" x2="1" y2="0"><stop offset="0" stop-color="#506048" stop-opacity=".5"/><stop offset=".08" stop-color="#a8a0bc" stop-opacity="0"/><stop offset=".92" stop-color="#a8a0bc" stop-opacity="0"/><stop offset="1" stop-color="#506048" stop-opacity=".5"/></linearGradient></defs><rect width="406" height="233" fill="#2a3a2a"/><rect x="55" y="0" width="298" height="233" fill="#a49cb8"/><rect x="55" y="0" width="298" height="233" fill="url(#t7s)"/><rect x="202" y="0" width="1.5" height="233" fill="#222"/><circle cx="203" cy="120" r="110" fill="none" stroke="#d8d4e4" stroke-width="1.2" opacity=".7"/></svg></div>
<div class="thumb" style="left:827px;top:804px"><svg width="406" height="233" viewBox="0 0 406 233" style="display:block"><defs></defs><rect width="406" height="233" fill="#4a4846"/><rect x="0" width="90" height="233" fill="#3e4442"/><rect x="90" width="170" height="233" fill="#4c4640"/><rect x="260" width="146" height="233" fill="#4a4440"/></svg></div>
<div class="thumb" style="left:1242px;top:804px"><svg width="406" height="233" viewBox="0 0 406 233" style="display:block"><defs></defs><rect width="406" height="233" fill="#e8e4e0"/><rect x="0" y="0" width="30" height="40" fill="#a89888"/><path d="M24 0 L70 0 L56 40 L10 40Z" fill="#fff"/><path d="M28 0 L66 0 L52 40 L14 40Z" fill="#c8bca8"/><path d="M38 40 L50 8 L130 40Z" fill="#fff"/><path d="M44 40 L54 14 L120 40Z" fill="#d8d0c0"/><path d="M62 0 L180 0 L180 40 L120 40Z" fill="#5a4436"/><path d="M120 0 L160 0 L150 40 L110 40Z" fill="#3a5a5e"/><path d="M150 10 Q165 15 170 30 L160 40 L140 40Z" fill="#b88a68"/><path d="M180 0 L218 0 L218 40 L180 40Z" fill="#7a6a5e"/><path d="M60 0 L80 0 L170 40 L150 40Z" fill="#fff"/><path d="M218 0 L290 0 L285 40 L218 40Z" fill="#c88a50"/><path d="M268 0 L272 0 L262 40 L258 40Z" fill="#2a2a2a"/><path d="M275 40 L290 0 L300 0 L286 40Z" fill="#fff"/><path d="M286 40 L298 8 L406 40Z" fill="#1e2650"/><path d="M300 20 Q312 14 318 30 L310 40 L298 40Z" fill="#c04030"/><path d="M290 0 L406 0 L406 40 L330 40 L298 8Z" fill="#d4aca4"/><path d="M300 0 L406 0 L406 6 L320 6Z" fill="#2a3a80" opacity=".8"/><path d="M330 22 Q360 18 380 30 L370 40 L330 40Z" fill="#40a0c0"/><path d="M380 0 L406 0 L406 40 L385 40Z" fill="#3050c0"/><path d="M290 5 L300 0 L390 40 L372 40Z" fill="#fff"/></svg></div>
</div></body></html>
